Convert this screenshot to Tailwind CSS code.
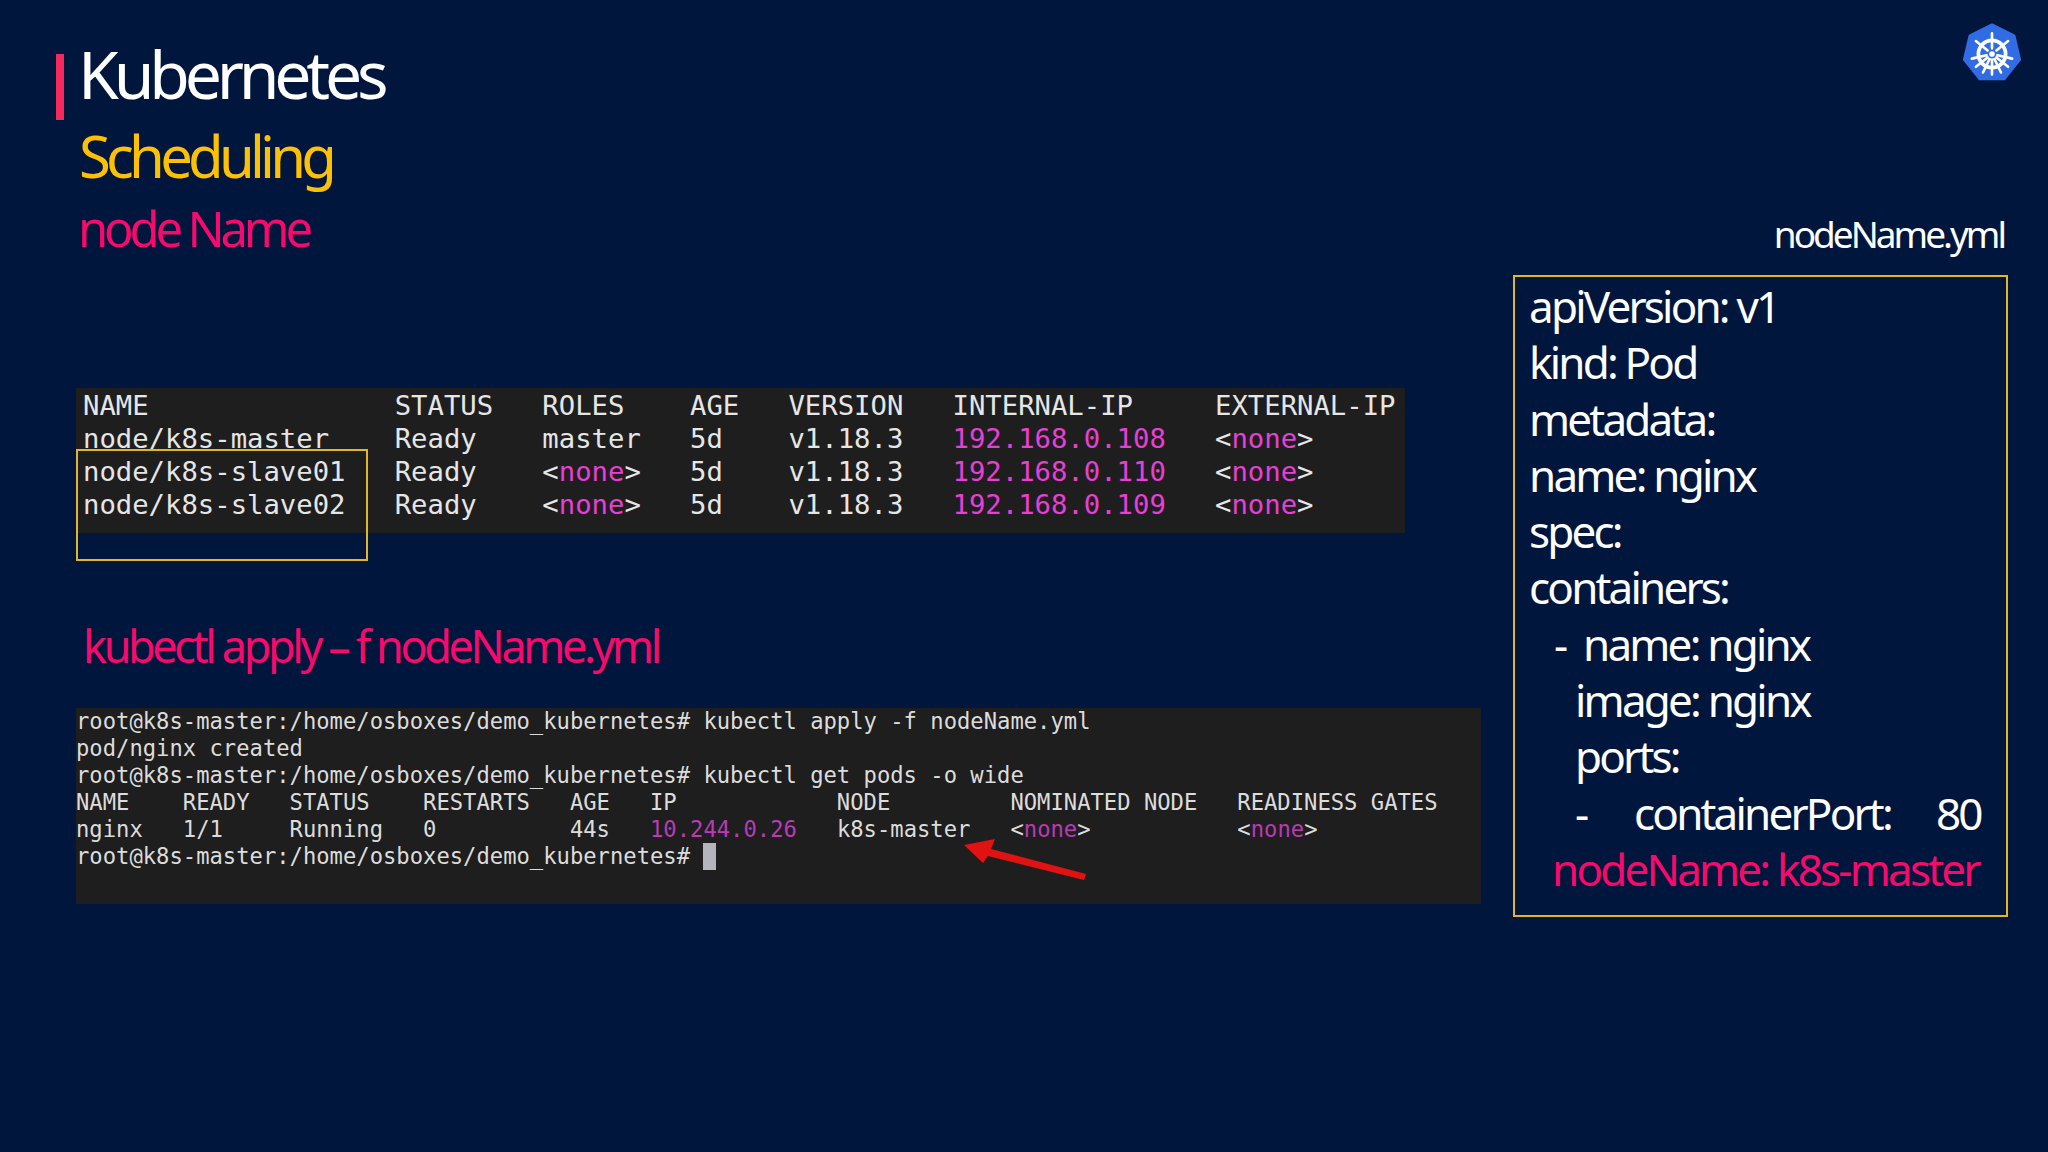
<!doctype html>
<html>
<head>
<meta charset="utf-8">
<script src="https://cdn.jsdelivr.net/npm/@tailwindcss/browser@4"></script>
</head>
<body class="m-0">
<main class="w-[2048px] h-[1152px] overflow-hidden bg-[#01163d] flex font-['Noto_Sans',sans-serif]">

    <!-- left column -->
    <div class="w-[1513px] shrink-0 pl-[76px] flex flex-col">
        <header class="h-[388px] -ml-[20px] pt-[36px] flex items-start">
            <div class="w-[8px] h-[66px] mt-[18px] bg-[#f5295c]"></div>
            <div class="ml-[17px] flex flex-col">
                <h1 class="-ml-[3px] text-[66px] leading-[74px] tracking-[-5.2px] text-white">Kubernetes</h1>
                <h2 class="-ml-[2px] mt-[8px] text-[58px] leading-[76px] tracking-[-4.8px] text-[#fcc006]">Scheduling</h2>
                <h3 class="-ml-[3px] text-[49px] leading-[68px] tracking-[-4.2px] text-[#f70a6b]">node Name</h3>
            </div>
        </header>

        <section class="relative w-[1329px] h-[145px] bg-[#1e1e1e] pl-[7px] pt-[2px]">
<pre class="font-['DejaVu_Sans_Mono',monospace] text-[27.25px] leading-[32.9px] text-[#e6e6e6]">NAME               STATUS   ROLES    AGE   VERSION   INTERNAL-IP     EXTERNAL-IP
node/k8s-master    Ready    master   5d    v1.18.3   <span class="text-[#e83fd6]">192.168.0.108</span>   &lt;<span class="text-[#e83fd6]">none</span>&gt;
node/k8s-slave01   Ready    &lt;<span class="text-[#e83fd6]">none</span>&gt;   5d    v1.18.3   <span class="text-[#e83fd6]">192.168.0.110</span>   &lt;<span class="text-[#e83fd6]">none</span>&gt;
node/k8s-slave02   Ready    &lt;<span class="text-[#e83fd6]">none</span>&gt;   5d    v1.18.3   <span class="text-[#e83fd6]">192.168.0.109</span>   &lt;<span class="text-[#e83fd6]">none</span>&gt;</pre>
            <!-- highlight box over the table -->
            <div class="absolute left-0 top-[61px] w-[292px] h-[112px] border-2 border-[#e3b52c]"></div>
        </section>

        <div class="h-[175px] pl-[7px] pt-[81px]">
            <p class="text-[45px] leading-[64px] tracking-[-3.4px] whitespace-pre text-[#f70a6b]">kubectl apply – f nodeName.yml</p>
        </div>

        <section class="relative w-[1405px] h-[196px] bg-[#1e1e1e]">
<pre class="font-['DejaVu_Sans_Mono',monospace] text-[22.18px] leading-[27px] text-[#dcdcdc]">root@k8s-master:/home/osboxes/demo_kubernetes# kubectl apply -f nodeName.yml
pod/nginx created
root@k8s-master:/home/osboxes/demo_kubernetes# kubectl get pods -o wide
NAME    READY   STATUS    RESTARTS   AGE   IP            NODE         NOMINATED NODE   READINESS GATES
nginx   1/1     Running   0          44s   <span class="text-[#b93bb5]">10.244.0.26</span>   k8s-master   &lt;<span class="text-[#b93bb5]">none</span>&gt;           &lt;<span class="text-[#b93bb5]">none</span>&gt;
root@k8s-master:/home/osboxes/demo_kubernetes# <span class="inline-block w-[13px] h-[27px] align-top bg-[#b4b4bc]"></span></pre>
            <!-- red arrow -->
            <svg class="absolute left-[881px] top-[130px]" width="140" height="45" viewBox="0 0 140 45">
                <path d="M7 7 L38 1 L34 11 L129 36 L127 42 L31 18 L26 25 Z" fill="#e11212"/>
            </svg>
        </section>
    </div>

    <!-- right column -->
    <div class="w-[495px] shrink-0 flex flex-col">
        <div class="h-[275px] flex flex-col items-end">
            <svg class="mt-[23px] -mr-[14px]" width="60" height="60" viewBox="0 0 64 64">
                <polygon points="32,2 55.5,13.5 61.5,39 45,59.5 19,59.5 2.5,39 8.500,13.500" fill="#326ce5" stroke="#326ce5" stroke-width="3" stroke-linejoin="round"/>
                <g stroke="#fff" fill="none" stroke-linecap="round">
                    <circle cx="32" cy="33" r="14.500" stroke-width="4"/>
                    <path stroke-width="2.800" d="M32 11V27 M32 39V55 M14.800 19.300L27.300 29.300 M36.700 36.700L49.200 46.700 M49.200 19.300L36.700 29.300 M27.300 36.700L14.800 46.700 M10.500 38L26.200 34.300 M37.800 34.300L53.500 38 M22.400 52.800L29.400 38.400 M34.600 38.400L41.600 52.800"/>
                </g>
                <circle cx="32" cy="33" r="3" fill="#fff"/>
            </svg>
            <p class="mt-[128px] mr-[4px] text-[37px] leading-[46px] tracking-[-3px] text-white">nodeName.yml</p>
        </div>
        <div class="h-[642px] border-2 border-[#e3b52c] pl-[14px] pt-[1px] text-[44px] leading-[56.300px] tracking-[-2.8px] text-white">
            <p class="whitespace-pre">apiVersion: v1</p>
            <p class="whitespace-pre">kind: Pod</p>
            <p class="whitespace-pre">metadata:</p>
            <p class="whitespace-pre">name: nginx</p>
            <p class="whitespace-pre">spec:</p>
            <p class="whitespace-pre">containers:</p>
            <p class="pl-[25px] flex"><span class="w-[29px]">-</span><span>name: nginx</span></p>
            <p class="pl-[46px]">image: nginx</p>
            <p class="pl-[46px]">ports:</p>
            <p class="pl-[46px] flex"><span class="w-[59px]">-</span><span class="w-[302px]">containerPort:</span><span>80</span></p>
            <p class="pl-[23px] text-[#f70a6b]">nodeName: k8s-master</p>
        </div>
    </div>
</main>
</body>
</html>
